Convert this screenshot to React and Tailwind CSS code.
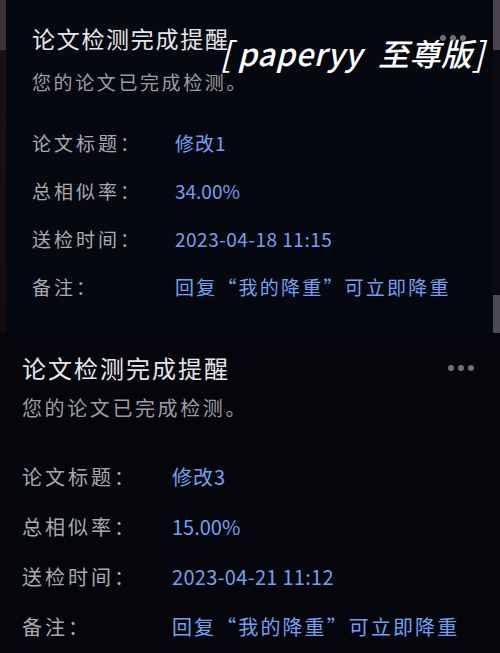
import React from "react";

const cjk = { fontFamily: '"Noto Sans CJK SC", "Noto Sans", sans-serif' };

// [label, value, tracking for the value]
const first = [
  ["论文标题：", "修改1", "tracking-[1px]"],
  ["总相似率：", "34.00%", "tracking-[0px]"],
  ["送检时间：", "2023-04-18 11:15", "tracking-[0.5px]"],
  ["备注：", "回复“我的降重”可立即降重", "tracking-[2.2px]"],
];

const second = [
  ["论文标题：", "修改3", "tracking-[1px]"],
  ["总相似率：", "15.00%", "tracking-[0px]"],
  ["送检时间：", "2023-04-21 11:12", "tracking-[0.3px]"],
  ["备注：", "回复“我的降重”可立即降重", "tracking-[2.1px]"],
];

function Dots({ className }) {
  return (
    <div className={"flex gap-[4px] " + className}>
      <span className="w-[6px] h-[6px] rounded-full bg-[#6f7078]" />
      <span className="w-[6px] h-[6px] rounded-full bg-[#6f7078]" />
      <span className="w-[6px] h-[6px] rounded-full bg-[#6f7078]" />
    </div>
  );
}

function Rows({ rows, labelW, rowH, size }) {
  return (
    <div className="flex flex-col">
      {rows.map(([k, v, t]) => (
        <div key={k} className={"flex items-center " + rowH + " " + size}>
          <div className={labelW + " shrink-0 text-[#a9a9ae] tracking-[3px]"}>{k}</div>
          <div className={"text-[#74a0f2] " + t}>{v}</div>
        </div>
      ))}
    </div>
  );
}

export default function App() {
  return (
    <div className="w-[500px] h-[653px] bg-black overflow-hidden" style={cjk}>
      {/* upper notification, sitting on top of the old photo edges */}
      <div className="flex h-[333px]">
        <div className="w-[6px] flex flex-col">
          <div className="h-[50px] bg-[#3b3336]" />
          <div className="flex-1 bg-gradient-to-b from-[#1c1014] to-[#150b0f]" />
        </div>
        <div className="relative flex-1 bg-[#060810] pl-[26px] pt-[22px]">
          <div className="h-[32px] leading-[32px] text-[23px] tracking-[1.7px] text-[#e6e6ea]">
            论文检测完成提醒
          </div>
          <div className="mt-[14px] h-[28px] leading-[28px] text-[19px] tracking-[2.6px] text-[#9c9ca2]">
            您的论文已完成检测。
          </div>
          <div className="mt-[23px]">
            <Rows rows={first} labelW="w-[143px]" rowH="h-[48px]" size="text-[19px]" />
          </div>
          <Dots className="absolute left-[434px] top-[35px]" />
          {/* watermark stamped over the header */}
          <div className="absolute left-[214px] top-[31px] flex items-center text-[31px] italic font-medium text-white whitespace-nowrap leading-[44px]">
            <span className="font-normal text-[34px]">[</span>
            <span className="ml-[6px] tracking-[0.5px]">paperyy</span>
            <span className="ml-[16px] tracking-[0.5px]">至尊版</span>
            <span className="font-normal text-[34px]">]</span>
          </div>
        </div>
        <div className="w-[7px] flex flex-col">
          <div className="h-[50px] bg-[#4a4450]" />
          <div className="h-[245px] bg-[#0a0a10]" />
          <div className="flex-1 bg-[#4a4a52]" />
        </div>
      </div>

      {/* lower notification */}
      <div className="relative h-[320px] bg-[#05060b] pl-[22px] pt-[19px]">
        <div className="h-[32px] leading-[32px] text-[24px] tracking-[2px] text-[#e6e6ea]">
          论文检测完成提醒
        </div>
        <div className="mt-[10px] h-[28px] leading-[28px] text-[20px] tracking-[2.6px] text-[#9c9ca2]">
          您的论文已完成检测。
        </div>
        <div className="mt-[30px]">
          <Rows rows={second} labelW="w-[150px]" rowH="h-[50px]" size="text-[20px]" />
        </div>
        <Dots className="absolute left-[448px] top-[32px]" />
      </div>
    </div>
  );
}
